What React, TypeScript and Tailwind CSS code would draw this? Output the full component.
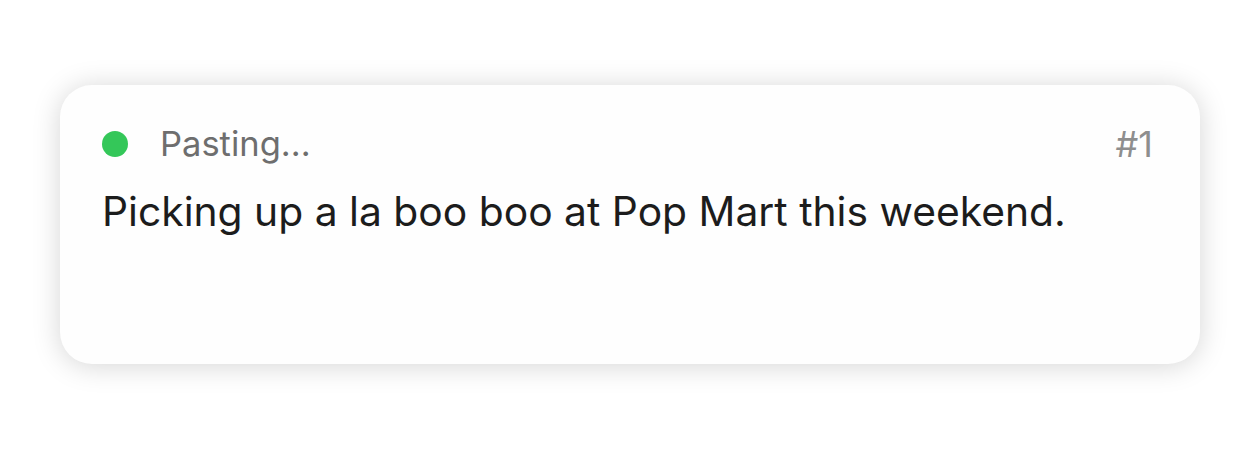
export default function App() {
  return (
    <div className="min-h-[450px] w-[1260px] bg-white pl-[60px] pt-[85px]" style={{ fontFamily: "Inter, 'Noto Sans', sans-serif" }}>
      <div className="flex h-[279px] w-[1140px] flex-col rounded-[32px] bg-[#fefefe] px-[42px] pt-[44px] shadow-[0_2px_28px_rgba(0,0,0,0.17)]">
        <div className="flex h-[30px] items-center">
          <span className="h-[26px] w-[26px] rounded-full bg-[#34c759]" />
          <span className="ml-[32px] text-[34.5px] leading-none text-[#6e6e6e]">Pasting...</span>
          <span className="ml-auto mr-[5px] text-[36px] leading-none text-[#8e8e8e]">#1</span>
        </div>
        <div className="mt-[27px] text-[40.8px] leading-tight text-[#1c1c1c]">
          Picking up a la boo boo at Pop Mart this weekend.
        </div>
      </div>
    </div>
  );
}
